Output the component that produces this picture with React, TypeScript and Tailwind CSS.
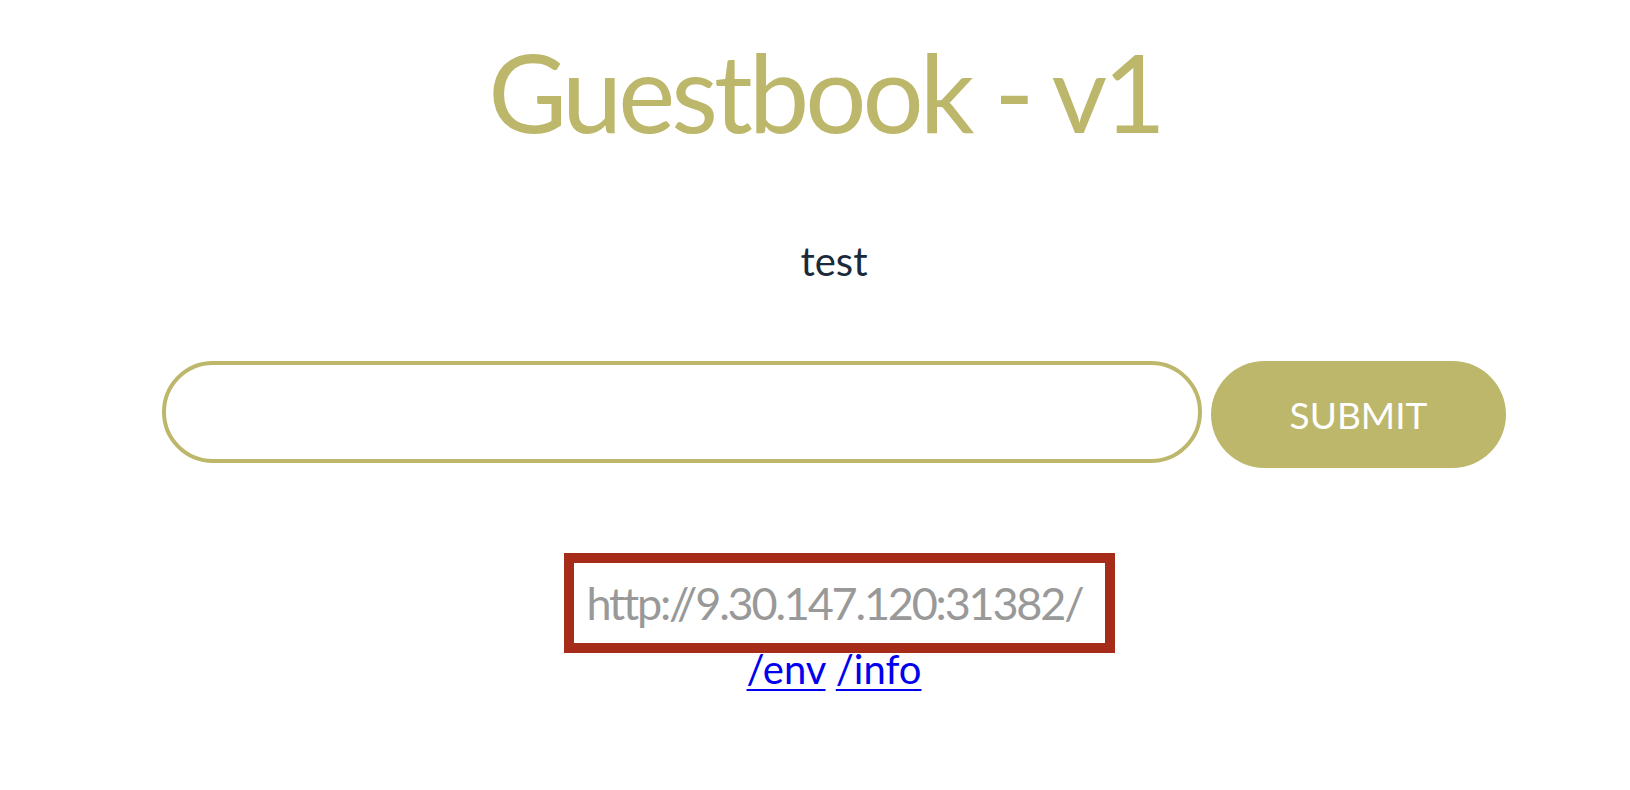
import React from 'react';

const App: React.FC = () => {
    const hostAddress = 'http://9.30.147.120:31382/';

    return (
        <div className="min-h-[790px] bg-white pl-[38px] pt-[37px] font-['Lato',_'Open_Sans',_sans-serif]">
            <div className="flex flex-col items-center">
                {/* Titulo */}
                <h1 className="text-[108px] leading-[108px] font-normal text-[#bdb76b] tracking-[-4px] -ml-[18px]">
                    Guestbook - v1
                </h1>

                {/* Entradas */}
                <div className="mt-[96px] text-[40px] leading-[40px] text-[#1b2a3b]">test</div>

                {/* Formulario */}
                <form className="mt-[80px] flex items-start gap-[9px]" onSubmit={(e) => e.preventDefault()}>
                    <input
                        type="text"
                        className="w-[1040px] h-[102px] rounded-full border-[4px] border-[#bdb76b] bg-white px-12 text-[36px] outline-none"
                    />
                    <button
                        type="submit"
                        className="w-[295px] h-[107px] rounded-full bg-[#bdb76b] text-white text-[37px] leading-none"
                    >
                        SUBMIT
                    </button>
                </form>

                {/* Host */}
                <div className="mt-[85px] ml-[10px] w-[551px] h-[100px] border-[10px] border-[#a62b19] flex items-center pl-[13px]">
                    <span className="text-[45px] leading-[45px] text-[#999999] tracking-[-2.2px] whitespace-nowrap">
                        {hostAddress}
                    </span>
                </div>

                <div className="mt-[-4px] text-[40px] leading-[40px]">
                    <a href="#" className="text-[#0000ee] underline decoration-2 underline-offset-[5px]">/env</a>{' '}
                    <a href="#" className="text-[#0000ee] underline decoration-2 underline-offset-[5px]">/info</a>
                </div>
            </div>
        </div>
    );
};

export default App;
